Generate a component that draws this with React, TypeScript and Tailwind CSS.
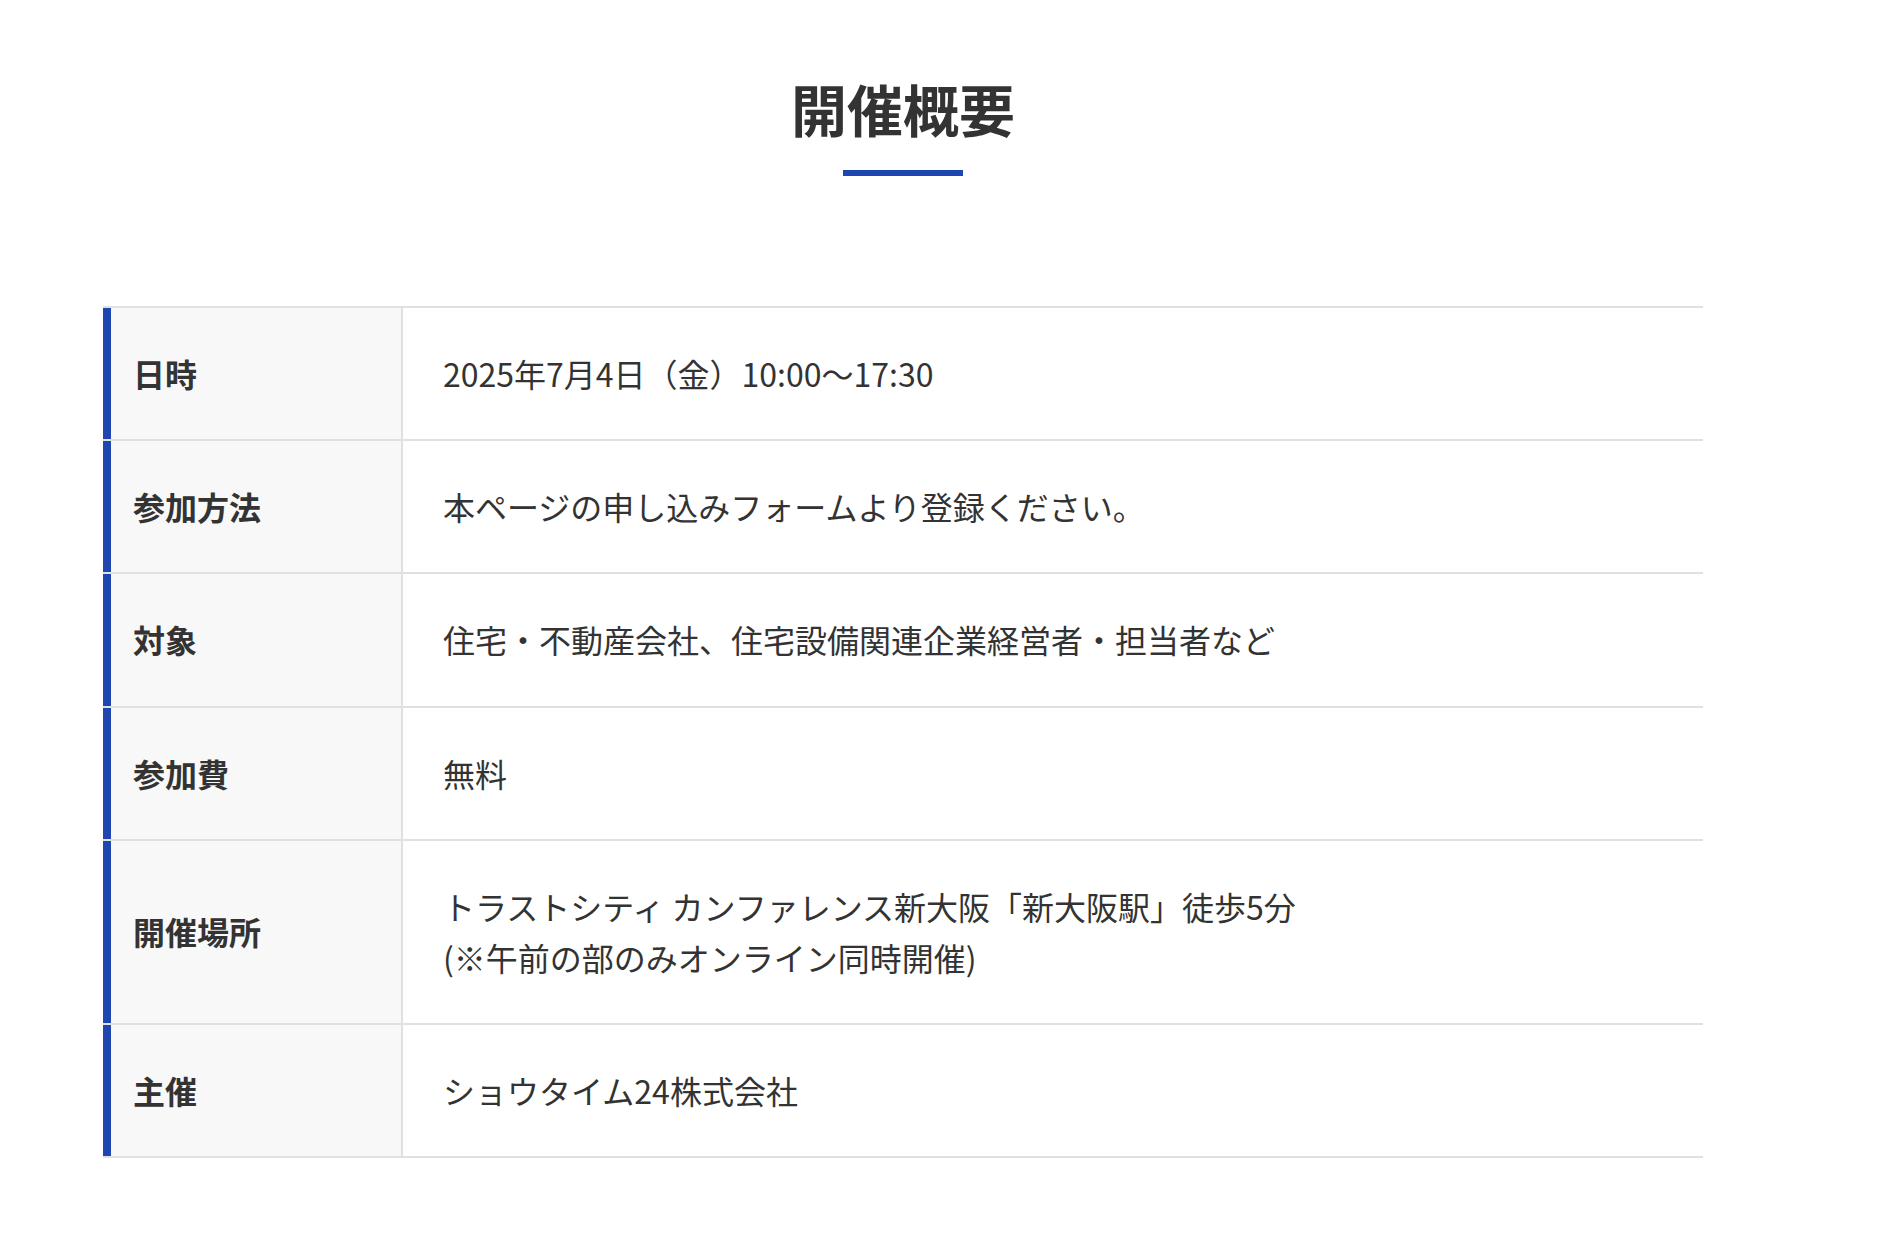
import React from "react";

const rows: { label: string; value: React.ReactNode }[] = [
  { label: "日時", value: "2025年7月4日（金）10:00〜17:30" },
  { label: "参加方法", value: "本ページの申し込みフォームより登録ください。" },
  { label: "対象", value: "住宅・不動産会社、住宅設備関連企業経営者・担当者など" },
  { label: "参加費", value: "無料" },
  {
    label: "開催場所",
    value: (
      <>
        トラストシティ カンファレンス新大阪「新大阪駅」徒歩5分
        <br />
        (※午前の部のみオンライン同時開催)
      </>
    ),
  },
  { label: "主催", value: "ショウタイム24株式会社" },
];

export default function App() {
  return (
    <div
      className="min-h-[1246px] w-full bg-white text-[#333333]"
      style={{ fontFamily: '"Noto Sans CJK JP", "Noto Sans", sans-serif' }}
    >
      <div className="ml-[103px] w-[1600px] pt-[66px] pb-[88px]">
        <div className="flex flex-col items-center">
          <h2 className="text-[56px] font-bold leading-[84px] text-[#333333]">開催概要</h2>
          <div className="mt-5 h-[6px] w-[120px] bg-[#1e46b0]" />
        </div>
        <div className="mt-[130px] border-t-2 border-[#e0e0e0]">
          {rows.map((r) => (
            <div key={r.label} className="flex border-b-2 border-[#e0e0e0]">
              <div className="flex w-[300px] shrink-0 items-center border-l-8 border-r-2 border-l-[#1e46b0] border-r-[#e0e0e0] bg-[#f8f8f8] pl-[22px] text-[32px] font-bold leading-[1.6]">
                {r.label}
              </div>
              <div className="flex-1 px-10 py-10 text-[32px] leading-[1.6]">{r.value}</div>
            </div>
          ))}
        </div>
      </div>
    </div>
  );
}
